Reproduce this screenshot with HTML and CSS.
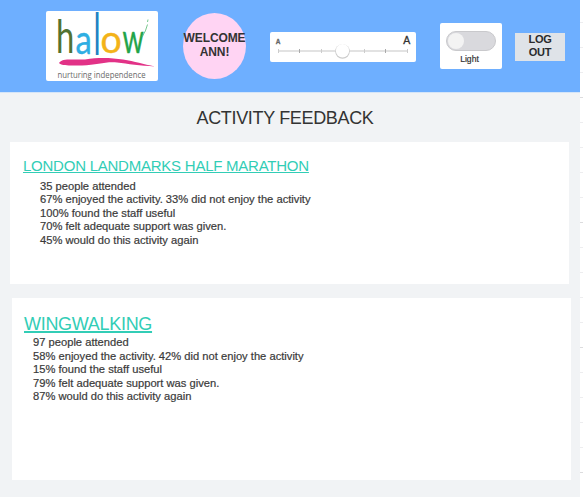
FILE: index.html
```html
<!DOCTYPE html>
<html lang="en">
<head>
<meta charset="utf-8">
<title>Activity feedback</title>
<link rel="stylesheet" href="styles.css">
</head>
<body>
<div class="screen">
  <header class="header">
    <svg class="logo" viewBox="46 11 112 70" role="img" aria-label="halow">
      <g class="wordmark">
        <text class="h" transform="translate(56 53) scale(.82 1.18)">h</text>
        <text class="a" transform="translate(75.500 53.500) scale(.82 1)">a</text>
        <text class="l" transform="translate(93.700 55) scale(.75 1.460)">l</text>
        <text class="o" transform="translate(100.500 53) scale(.94 .97)">o</text>
        <text class="w" transform="translate(122.500 53) scale(.68 1)">w</text>
      </g>
      <path class="flourish" d="M142 37Q146 31 147.500 24.500M147.500 22L148 19.500"/>
      <path class="swoosh" d="M59 63C62 58 72 60 85 59.500C100 57 112 58 123 59.500C135 61.500 143 64 155 66.500C140 65.500 128 64 117 62.500C105 61.500 97 65 82 65.500C72 65 62 66.500 59 63Z"/>
      <text class="tagline" x="57.500" y="77.500" textLength="88" lengthAdjust="spacingAndGlyphs">nurturing independence</text>
    </svg>
    <div class="welcome">WELCOME<br>ANN!</div>
    <svg class="slider" viewBox="0 0 146 30">
      <text class="small-a" x="5.700" y="12">A</text>
      <text class="large-a" x="133.300" y="12.200">A</text>
      <path class="track" d="M8 19H138"/>
      <path class="tick" d="M8.500 17v4M51.500 17v4M94.500 17v4M137.500 17v4"/>
      <path class="tick-dark" d="M29.500 17v4M115.500 17v4"/>
      <circle class="shadow" cx="72.500" cy="19.500" r="7.300"/>
      <circle class="knob" cx="72.500" cy="18.700" r="6.700"/>
    </svg>
    <div class="theme">
      <div class="switch"></div>
      <div class="theme-label">Light</div>
    </div>
    <button class="logout">LOG<br>OUT</button>
  </header>
  <main class="content">
    <h1 class="title">ACTIVITY FEEDBACK</h1>
    <section class="card marathon">
      <h2>LONDON LANDMARKS HALF MARATHON</h2>
      <p>35 people attended<br>67% enjoyed the activity. 33% did not enjoy the activity<br>100% found the staff useful<br>70% felt adequate support was given.<br>45% would do this activity again</p>
    </section>
    <section class="card wingwalking">
      <h2>WINGWALKING</h2>
      <p>97 people attended<br>58% enjoyed the activity. 42% did not enjoy the activity<br>15% found the staff useful<br>79% felt adequate support was given.<br>87% would do this activity again</p>
    </section>
  </main>
</div>
<div class="canvas-grid"></div>
</body>
</html>
```
FILE: styles.css
```css
* { box-sizing: border-box; }
body {
  margin: 0;
  width: 583px;
  height: 497px;
  overflow: hidden;
  display: flex;
  background: #fff;
  font-family: "Liberation Sans", Arial, sans-serif;
  color: #333;
}
.screen { width: 580px; height: 497px; background: #f1f3f5; }
.canvas-grid {
  width: 3px;
  background:
    repeating-linear-gradient(to bottom, #dcdcde 0 1px, transparent 1px 125px) 0 97px / 3px 500px,
    repeating-linear-gradient(to bottom, #ededef 0 1px, transparent 1px 25px) 0 22px / 3px 500px;
}
.header {
  height: 93px;
  display: flex;
  align-items: flex-start;
  padding-left: 46px;
  background: #6eafff;
  border-bottom: 1px solid #d5e5f8;
}
.logo {
  width: 112px;
  height: 70px;
  margin-top: 11px;
  background: #fff;
  border-radius: 2px;
  overflow: visible;
}
.wordmark { font: 40px Lato, sans-serif; }
.wordmark text { stroke-width: .4px; }
.h { fill: #527231; }
.a { fill: #2eaee3; stroke: #2eaee3; }
.l { fill: #2482c3; font-family: "Liberation Sans", sans-serif; }
.o { fill: #f3b318; stroke: #f3b318; }
.w { fill: #22a449; stroke: #22a449; }
.flourish { fill: none; stroke: #54b970; stroke-width: .8; }
.swoosh { fill: #e23287; }
.tagline { font: 8.500px "Open Sans", sans-serif; fill: #6a6a6a; }
.welcome {
  width: 63px;
  height: 66px;
  margin: 13px 0 0 25px;
  padding-top: 18px;
  border-radius: 50%;
  background: #ffd4f3;
  font-size: 12px;
  font-weight: bold;
  line-height: 14px;
  letter-spacing: -.1px;
  text-align: center;
  white-space: nowrap;
}
.slider {
  width: 146px;
  height: 30px;
  margin: 32px 0 0 24px;
  background: #fff;
  border-radius: 2px;
}
.small-a { font: bold 6.500px "Liberation Sans", sans-serif; fill: #666; stroke: #666; stroke-width: .3; }
.large-a { font: 10.500px "Liberation Sans", sans-serif; fill: #333; stroke: #333; stroke-width: .3; }
.track { stroke: #d9d9d9; stroke-width: 1.6; }
.tick { stroke: #ccc; }
.tick-dark { stroke: #aaa; }
.shadow { fill: #ccc; }
.knob { fill: #fff; }
.theme {
  width: 62px;
  height: 46px;
  margin: 23px 0 0 24px;
  padding: 8px 6px 0;
  background: #fff;
  border-radius: 2px;
}
.switch {
  height: 20px;
  padding: 1px;
  border: 1px solid #c9c9cc;
  border-radius: 10px;
  background: #d9d9dd;
}
.switch::before {
  content: "";
  display: block;
  width: 16px;
  height: 16px;
  border-radius: 50%;
  background: #f3f3f3;
}
.theme-label {
  margin: 2px 0 0 -3px;
  font-size: 8.6px;
  line-height: 12px;
  text-align: center;
  -webkit-text-stroke: .2px #333;
}
.logout {
  width: 50px;
  height: 28px;
  margin: 33px 0 0 13px;
  padding: 0 0 2px;
  border: 0;
  background: #dfe3e8;
  color: #292b2d;
  font: bold 11px/13px "Liberation Sans", sans-serif;
  letter-spacing: -.3px;
}
.content { padding-left: 10px; }
.title {
  margin: 0 0 0 -20px;
  padding-top: 15px;
  height: 49px;
  font-size: 18px;
  font-weight: normal;
  line-height: 21px;
  letter-spacing: -.34px;
  text-align: center;
}
.card { background: #fff; }
.card h2 {
  margin: 0;
  font-weight: normal;
  color: #32cdb6;
  text-decoration: underline;
  white-space: nowrap;
}
.card p {
  margin: 0;
  font-size: 11.180px;
  line-height: 13.500px;
  white-space: nowrap;
  color: #3a3a3a;
  -webkit-text-stroke: .2px #3a3a3a;
}
.marathon { width: 559px; height: 142px; padding: 15px 0 0 13px; }
.marathon h2 { font-size: 15px; line-height: 18px; letter-spacing: -.24px; }
.marathon p { padding: 4.500px 0 0 17px; }
.wingwalking { width: 559px; height: 182px; margin: 14px 0 0 2px; padding: 16px 0 0 12px; }
.wingwalking h2 { font-size: 18px; line-height: 21px; letter-spacing: -.3px; text-decoration-thickness: 1.500px; }
.wingwalking p { padding: 1px 0 0 9px; }
```
